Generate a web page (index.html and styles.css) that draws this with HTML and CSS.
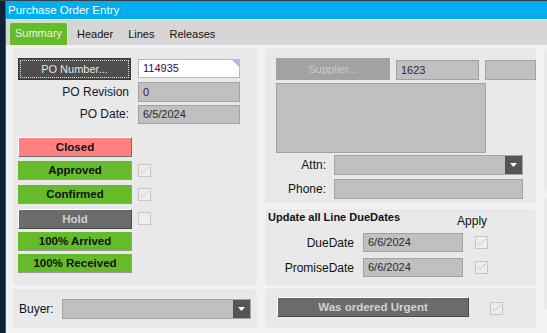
FILE: index.html
```html
<!DOCTYPE html>
<html>
<head>
<meta charset="utf-8">
<title>Purchase Order Entry</title>
<link rel="stylesheet" href="styles.css">
</head>
<body>
<div class="app">
  <div class="topline"></div>
  <div class="frame">
    <div class="main">
      <div class="titlebar">Purchase Order Entry</div>
      <div class="tabs">
        <div class="tab active">Summary</div>
        <div class="tab first-tab">Header</div>
        <div class="tab">Lines</div>
        <div class="tab">Releases</div>
      </div>
      <div class="content">
        <div class="col col-left">
          <div class="panel po">
            <div class="po-grid">
              <div class="btn-dark"><span class="focus">PO Number...</span></div>
              <div class="field white key first">114935</div>
              <div class="lbl">PO Revision</div>
              <div class="field h20">0</div>
              <div class="lbl">PO Date:</div>
              <div class="field">6/5/2024</div>
            </div>
            <div class="status">
              <div class="srow"><div class="sbtn closed">Closed</div></div>
              <div class="srow"><div class="sbtn green">Approved</div>
                <svg class="cb" width="13" height="13" viewBox="0 0 13 13"><rect x="0.5" y="0.5" width="12" height="12" fill="#eeeeee" stroke="#c6c6c6"/><path d="M2.5 6 L5 8.7 L10.5 2.8" fill="none" stroke="#c2c2c2" stroke-width="1"/></svg></div>
              <div class="srow"><div class="sbtn green">Confirmed</div>
                <svg class="cb" width="13" height="13" viewBox="0 0 13 13"><rect x="0.5" y="0.5" width="12" height="12" fill="#eeeeee" stroke="#c6c6c6"/><path d="M2.5 6 L5 8.7 L10.5 2.8" fill="none" stroke="#c2c2c2" stroke-width="1"/></svg></div>
              <div class="srow"><div class="sbtn hold">Hold</div>
                <svg class="cb" width="13" height="13" viewBox="0 0 13 13"><rect x="0.5" y="0.5" width="12" height="12" fill="#eeeeee" stroke="#c6c6c6"/></svg></div>
              <div class="srow"><div class="sbtn green">100% Arrived</div></div>
              <div class="srow"><div class="sbtn green">100% Received</div></div>
            </div>
          </div>
          <div class="panel buyer">
            <span class="lbl-inline">Buyer:</span>
            <div class="combo w189"><span class="drop"><svg width="7" height="4" viewBox="0 0 7 4"><path d="M0 0 H7 L3.5 4 Z" fill="#ffffff"/></svg></span></div>
          </div>
        </div>

        <div class="col col-right">
          <div class="panel supplier">
            <div class="sup-row">
              <div class="btn-disabled">Supplier...</div>
              <div class="field key w83">1623</div>
              <div class="field w51"></div>
            </div>
            <div class="field address"></div>
            <div class="form-row first-row">
              <span class="lbl-right">Attn:</span>
              <div class="combo w189"><span class="drop"><svg width="7" height="4" viewBox="0 0 7 4"><path d="M0 0 H7 L3.5 4 Z" fill="#ffffff"/></svg></span></div>
            </div>
            <div class="form-row">
              <span class="lbl-right">Phone:</span>
              <div class="field w189 h20"></div>
            </div>
          </div>

          <div class="panel dates">
            <div class="dates-head">
              <span class="dates-title">Update all Line DueDates</span>
              <span class="apply">Apply</span>
            </div>
            <div class="dates-grid">
              <span class="lbl-date">DueDate</span>
              <div class="field">6/6/2024</div>
              <svg class="cb" width="13" height="13" viewBox="0 0 13 13"><rect x="0.5" y="0.5" width="12" height="12" fill="#eeeeee" stroke="#c6c6c6"/><path d="M2.5 6 L5 8.7 L10.5 2.8" fill="none" stroke="#c2c2c2" stroke-width="1"/></svg>
              <span class="lbl-date">PromiseDate</span>
              <div class="field">6/6/2024</div>
              <svg class="cb" width="13" height="13" viewBox="0 0 13 13"><rect x="0.5" y="0.5" width="12" height="12" fill="#eeeeee" stroke="#c6c6c6"/><path d="M2.5 6 L5 8.7 L10.5 2.8" fill="none" stroke="#c2c2c2" stroke-width="1"/></svg>
            </div>
          </div>

          <div class="panel urgent">
            <div class="sbtn hold wide">Was ordered Urgent</div>
            <svg class="cb" width="13" height="13" viewBox="0 0 13 13"><rect x="0.5" y="0.5" width="12" height="12" fill="#eeeeee" stroke="#c6c6c6"/><path d="M2.5 6 L5 8.7 L10.5 2.8" fill="none" stroke="#c2c2c2" stroke-width="1"/></svg>
          </div>
        </div>

        <div class="col col-far">
          <div class="panel far1"></div>
          <div class="panel far2"></div>
        </div>
      </div>
    </div>
  </div>
</div>
</body>
</html>
```

FILE: styles.css
```css
html, body {
  margin: 0;
  padding: 0;
}
body {
  width: 547px;
  height: 333px;
  overflow: hidden;
  background: #f2f2f4;
  font-family: "Liberation Sans", Arial, sans-serif;
  color: #16162a;
}
.app {
  height: 333px;
  display: flex;
  flex-direction: column;
}
.topline {
  height: 1px;
  background: #3a3d40;
}
.frame {
  flex: 1;
  display: flex;
  border-left: 5px solid #0f2333;
  min-height: 0;
}
.main {
  flex: 1;
  min-width: 0;
  display: flex;
  flex-direction: column;
  border-left: 1px solid #2d6489;
}
.titlebar {
  height: 18px;
  line-height: 18px;
  background: #00adef;
  color: #ffffff;
  font-size: 11.5px;
  padding-left: 2px;
  border-bottom: 1px solid #e6f2f8;
}
.tabs {
  height: 25px;
  background: #d6d6d6;
  display: flex;
  align-items: flex-end;
  padding-left: 3px;
  font-size: 11px;
}
.tab {
  height: 22px;
  line-height: 22px;
  padding: 1px 7.5px 0;
  color: #111111;
}
.tab.first-tab {
  margin-left: 1.5px;
}
.tab.active {
  background: #66bb2a;
  color: #eaf6e0;
  border: 1px solid #d0eabb;
  border-bottom: none;
  border-radius: 3px 3px 0 0;
  padding: 0 5px;
  height: 22px;
  line-height: 21px;
}
.content {
  flex: 1;
  min-height: 0;
  display: grid;
  grid-template-columns: 244px 271px 40px;
  column-gap: 8px;
  padding: 3px 0 0 7px;
  overflow: hidden;
  align-items: start;
}
.col {
  display: flex;
  flex-direction: column;
}
.panel {
  background: #e9e9e9;
  border-radius: 4px;
}

/* left column */
.po {
  height: 238px;
  box-sizing: border-box;
  padding: 10px 0 0 5px;
}
.po-grid {
  display: grid;
  grid-template-columns: 113px 102px;
  grid-template-rows: 22px 22px 22px;
  column-gap: 7px;
}
.btn-dark {
  box-sizing: border-box;
  height: 22px;
  background: #4e4e4e;
  border: 1px solid #383838;
  padding: 1px;
}
.focus {
  display: block;
  height: 100%;
  box-sizing: border-box;
  border: 1px dotted #d8d8d8;
  color: #e4e4e4;
  font-size: 11px;
  line-height: 16px;
  text-align: center;
}
.lbl {
  align-self: end;
  height: 20px;
  line-height: 20px;
  text-align: right;
  padding-right: 2px;
  font-size: 12px;
  color: #16162a;
}
.field {
  position: relative;
  box-sizing: border-box;
  height: 19px;
  background: #c0c0c0;
  border: 1px solid #a2a2a2;
  font-size: 11px;
  line-height: 17px;
  padding-left: 4px;
  color: #2a2a2a;
  align-self: end;
}
.field.first {
  align-self: start;
  margin-top: 1px;
}
.field.white {
  background: #ffffff;
  border-color: #b8b8b8;
  color: #3a0a4a;
}
.field.h20 {
  height: 20px;
  line-height: 18px;
}
.key::after {
  content: "";
  position: absolute;
  top: 0;
  right: 0;
  width: 0;
  height: 0;
  border-top: 7px solid #a9bfdc;
  border-left: 7px solid transparent;
}
.status {
  margin-top: 13px;
  display: grid;
  grid-template-rows: 24px 24px 24px 23px 22px 20px;
  align-items: start;
}
.srow {
  display: flex;
  align-items: flex-start;
  gap: 6px;
}
.sbtn {
  box-sizing: border-box;
  width: 114px;
  height: 19px;
  line-height: 17px;
  border: 1px solid;
  font-size: 11.5px;
  font-weight: bold;
  text-align: center;
  color: #111111;
}
.sbtn.closed {
  height: 20px;
  line-height: 18px;
  background: #ff8080;
  border-color: #ffffff #6e6e6e #6e6e6e #ffffff;
}
.sbtn.green {
  background: #66bb2a;
  border-color: #66bb2a #9a9a9a #9a9a9a #66bb2a;
}
.sbtn.hold {
  height: 20px;
  line-height: 18px;
  background: #6b6b6b;
  color: #d2d2d2;
  border-color: #ffffff #4a4a4a #4a4a4a #ffffff;
}
.cb {
  display: block;
  flex: none;
  margin-top: 3px;
}
.buyer {
  margin-top: 3px;
  height: 39px;
  box-sizing: border-box;
  display: flex;
  align-items: center;
  padding-left: 6px;
  gap: 8px;
}
.lbl-inline {
  font-size: 12px;
  color: #111111;
  width: 35px;
}
.combo {
  box-sizing: border-box;
  height: 20px;
  background: #c0c0c0;
  border: 1px solid #a2a2a2;
  display: flex;
  justify-content: flex-end;
}
.drop {
  width: 17px;
  background: #555555;
  display: flex;
  align-items: center;
  justify-content: center;
}
.w189 { width: 189px; }
.w83 { width: 83px; height: 20px; }
.w51 { width: 51px; height: 20px; }

/* right column */
.supplier {
  height: 155px;
  box-sizing: border-box;
  padding: 10px 0 0 11px;
}
.sup-row {
  display: flex;
  align-items: flex-start;
  gap: 6px;
}
.sup-row .field {
  margin-top: 1px;
  line-height: 18px;
}
.btn-disabled {
  width: 114px;
  height: 22px;
  line-height: 22px;
  background: #a2a2a2;
  color: #cbcbcb;
  font-size: 11px;
  text-align: center;
}
.address {
  width: 210px;
  height: 70px;
  margin-top: 3px;
}
.form-row {
  display: flex;
  align-items: center;
  margin-top: 4px;
  gap: 6px;
}
.form-row.first-row {
  margin-top: 2px;
}
.lbl-right {
  width: 50px;
  padding-right: 2px;
  text-align: right;
  font-size: 12px;
  color: #111111;
}
.dates {
  margin-top: 6px;
  height: 77px;
  box-sizing: border-box;
  padding-top: 2px;
}
.dates-head {
  display: flex;
  align-items: flex-start;
  padding-left: 3px;
}
.dates-title {
  font-size: 11px;
  font-weight: bold;
  line-height: 13px;
  color: #111111;
}
.apply {
  margin-left: 57px;
  margin-top: 3px;
  font-size: 12px;
  line-height: 14px;
  color: #111111;
}
.dates-grid {
  margin-top: 5px;
  display: grid;
  grid-template-columns: 89px 100px 13px;
  grid-template-rows: 19px 19px;
  column-gap: 9px;
  row-gap: 6px;
  align-items: center;
}
.dates-grid .cb {
  margin: 0 0 0 3px;
}
.lbl-date {
  text-align: right;
  font-size: 12px;
  color: #111111;
}
.urgent {
  margin-top: 2px;
  height: 40px;
  box-sizing: border-box;
  padding: 9px 0 0 12px;
  display: flex;
  align-items: flex-start;
  gap: 21px;
}
.sbtn.wide {
  width: 192px;
}
.urgent .cb {
  margin-top: 5px;
}

/* far right partial column */
.far1 {
  height: 144px;
}
.far2 {
  margin-top: 5px;
  height: 113px;
}
```
